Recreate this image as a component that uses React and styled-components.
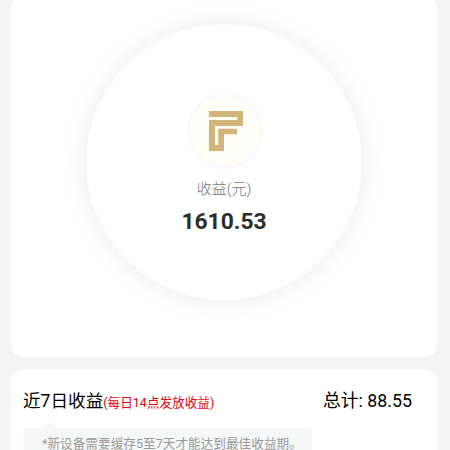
import React from "react";
import styled, { createGlobalStyle } from "styled-components";

const GlobalStyle = createGlobalStyle`
  * { box-sizing: border-box; }
  body {
    margin: 0;
    background: #f4f4f4;
    font-family: Roboto, "Noto Sans CJK SC", sans-serif;
    overflow: hidden;
  }
`;

const Page = styled.main`
  height: 450px;
  padding: 0 13px 0 11px;
  overflow: hidden;
  display: flex;
  flex-direction: column;
  gap: 12px;
`;

const Card = styled.section`
  flex: none;
  background: #fff;
  border-radius: 12px;
`;

const BalanceCard = styled(Card)`
  height: 361px;
  margin-top: -4px;
  padding-top: 28px;
  display: flex;
  justify-content: center;
  align-items: flex-start;
`;

const Dial = styled.div`
  width: 276px;
  height: 276px;
  border-radius: 50%;
  background: #fff;
  box-shadow: 0 0 26px rgba(0, 0, 0, 0.08);
  display: flex;
  flex-direction: column;
  align-items: center;
  padding-top: 69px;
`;

const Coin = styled.div`
  width: 76px;
  height: 76px;
  border-radius: 50%;
  background: #fffef7;
  border: 3px solid #fcfafa;
  display: flex;
  align-items: center;
  justify-content: center;
  padding-left: 2px;
  margin-left: 1px;
`;

const Label = styled.div`
  margin-top: 9px;
  font-size: 15px;
  line-height: 22px;
  font-weight: 300;
  color: #777;
`;

const Amount = styled.div`
  margin-top: 8px;
  font-size: 22.8px;
  line-height: 28px;
  font-weight: 700;
  color: #2d2d2d;
`;

const WeekCard = styled(Card)`
  height: 120px;
  padding: 18px 25px 0 12px;
`;

const Header = styled.header`
  display: flex;
  justify-content: space-between;
  align-items: baseline;
  line-height: 28px;
  white-space: nowrap;
`;

const Title = styled.h2`
  margin: 0;
  font-size: 17.6px;
  font-weight: 400;
  color: #000;
`;

const Note = styled.span`
  font-size: 12.6px;
  color: #e60012;
`;

const Total = styled.div`
  font-size: 17.8px;
  color: #000;
`;

const Tip = styled.div`
  position: relative;
  width: 288.5px;
  height: 40px;
  margin-top: 10.5px;
  padding: 5.5px 0 0 19px;
  border-radius: 5px;
  background: #f6f8f8;
  font-size: 12.65px;
  line-height: 22px;
  color: #999;
  white-space: nowrap;

  &::before {
    content: "";
    position: absolute;
    left: 20px;
    top: -6px;
    border: 6px solid transparent;
    border-top: 0;
    border-bottom-color: #f6f8f8;
  }
`;

function CoinLogo() {
  return (
    <svg width="34" height="40" viewBox="0 0 34 40" fill="#d3b57c">
      <path d="M0 0H34V15H6V34H9.3V17.7H28V23.3H15V40H0V9H28.2V6H0Z" />
    </svg>
  );
}

export default function App() {
  return (
    <>
      <GlobalStyle />
      <Page>
        <BalanceCard>
          <Dial>
            <Coin>
              <CoinLogo />
            </Coin>
            <Label>收益(元)</Label>
            <Amount>1610.53</Amount>
          </Dial>
        </BalanceCard>
        <WeekCard>
          <Header>
            <Title>
              近7日收益<Note>(每日14点发放收益)</Note>
            </Title>
            <Total>总计: 88.55</Total>
          </Header>
          <Tip>*新设备需要缓存5至7天才能达到最佳收益期。</Tip>
        </WeekCard>
      </Page>
    </>
  );
}
